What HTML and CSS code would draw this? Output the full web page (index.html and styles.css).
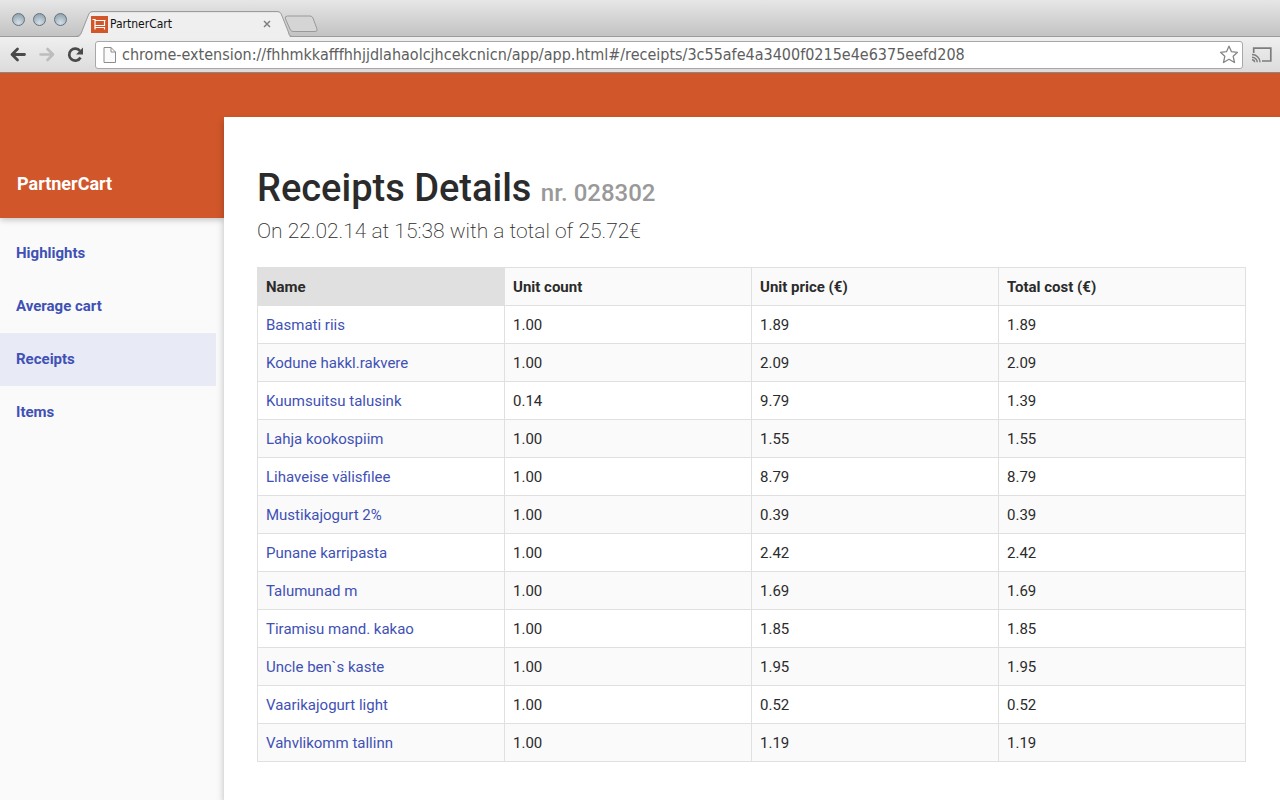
FILE: index.html
```html
<!DOCTYPE html>
<html lang="en">
<head>
<meta charset="utf-8">
<title>PartnerCart</title>
<link rel="stylesheet" href="styles.css">
</head>
<body>
<div class="browser">
  <div class="tab-strip">
    <div class="window-buttons">
      <button class="light" aria-label="Close window"></button>
      <button class="light" aria-label="Minimize window"></button>
      <button class="light" aria-label="Zoom window"></button>
    </div>
    <div class="tab">
      <svg class="tab-shape" width="216" height="27" viewBox="0 0 216 27" aria-hidden="true">
        <path d="M0 26.5C4 26 5 24 6 21L12 5C13 2 14 1.500 17 1.500H201C204 1.500 205 2 206 5L212 20C213 24 213 26.500 216 26.500V28H0Z" fill="#efefef"/>
        <path d="M0 25.500C4 25 5 23 6 20L12 5C13 2 14 .5 17 .5H201C204 .5 205 2 206 5L212 20C213 23 213 25 216 25.500" fill="none" stroke="#9b9b9b"/>
      </svg>
      <svg class="favicon" width="17" height="17" viewBox="0 0 17 17" aria-hidden="true">
        <rect width="17" height="17" fill="#d1572a"/>
        <path d="M1.500 3.500H4V13.500M4 4.500H14.500M13.500 4V9.500H4M3.500 11.500H14M13.500 11V13.500" fill="none" stroke="#fff" stroke-width="1.200"/>
      </svg>
      <span class="tab-title">PartnerCart</span>
      <button class="tab-close" aria-label="Close tab">
        <svg width="8" height="8" viewBox="0 0 8 8"><path d="M1 1L7 7M7 1L1 7" stroke="#808080" stroke-width="1.500"/></svg>
      </button>
    </div>
    <button class="new-tab" aria-label="New tab">
      <svg width="34" height="18" viewBox="0 0 34 18"><path d="M3.500 1H26Q28 1 29 3L33 14Q34 16.500 31 16.500H9Q7 16.500 6 14L1.500 4Q.5 1 3.500 1Z" fill="#d5d5d5" stroke="#9a9a9a"/></svg>
    </button>
  </div>
  <div class="toolbar">
    <button class="tool" aria-label="Back"><svg width="17" height="15" viewBox="0 0 17 15"><path d="M7.500 2L2 7.500L7.500 13M2.500 7.500H14.500" fill="none" stroke="#4a4a4a" stroke-width="2.800" stroke-linecap="round" stroke-linejoin="round"/></svg></button>
    <button class="tool" aria-label="Forward"><svg width="17" height="15" viewBox="0 0 17 15"><path d="M9.500 2L15 7.500L9.500 13M14.500 7.500H2.500" fill="none" stroke="#bdbdbd" stroke-width="2.600" stroke-linecap="round" stroke-linejoin="round"/></svg></button>
    <button class="tool" aria-label="Reload"><svg width="18" height="16" viewBox="0 0 18 16"><path d="M14 4A6 6 0 1 0 14.500 10.500" fill="none" stroke="#4a4a4a" stroke-width="2.700"/><path d="M17 .5V7.500H10Z" fill="#4a4a4a"/></svg></button>
    <div class="omnibox">
      <svg width="13" height="16" viewBox="0 0 13 16" aria-hidden="true"><path d="M1 .5H8L12.500 5V15.500H1ZM8 .5V5H12.500" fill="#fafafa" stroke="#8d8d8d"/></svg>
      <input class="address" aria-label="Address" value="chrome-extension://fhhmkkafffhhjjdlahaolcjhcekcnicn/app/app.html#/receipts/3c55afe4a3400f0215e4e6375eefd208">
      <button class="star" aria-label="Bookmark"><svg width="20" height="19" viewBox="0 0 20 19"><path d="M10 1.200L12.500 6.700L18.500 7.300L14.200 11.300L15.500 17.500L10 14.300L4.500 17.500L5.800 11.300L1.500 7.300L7.500 6.700Z" fill="#fff" stroke="#868686" stroke-width="1.300" stroke-linejoin="round"/></svg></button>
    </div>
    <button class="cast" aria-label="Cast"><svg width="20" height="16" viewBox="0 0 20 16"><path d="M1.700 6V1.200H18.800V14H10" fill="none" stroke="#7d7d7d" stroke-width="1.700"/><path d="M0 7.500A8 8 0 0 1 8 15.300M0 10.200A5.300 5.300 0 0 1 5.300 15.300M0 12.800A2.600 2.600 0 0 1 2.600 15.300" fill="none" stroke="#7d7d7d" stroke-width="1.400"/></svg></button>
  </div>
</div>
<div class="app">
  <aside class="sidebar">
    <div class="brand">PartnerCart</div>
    <nav class="nav">
      <a href="#/highlights">Highlights</a>
      <a href="#/average">Average cart</a>
      <a href="#/receipts" class="active">Receipts</a>
      <a href="#/items">Items</a>
    </nav>
  </aside>
  <main class="content">
    <h1>Receipts Details <small>nr. 028302</small></h1>
    <p class="lead">On 22.02.14 at 15:38 with a total of 25.72€</p>
    <table class="receipt">
      <thead><tr><th scope="col" class="sorted">Name</th><th scope="col">Unit count</th><th scope="col">Unit price (€)</th><th scope="col">Total cost (€)</th></tr></thead>
      <tbody>
        <tr><td><a href="#/items/1">Basmati riis</a></td><td>1.00</td><td>1.89</td><td>1.89</td></tr>
        <tr><td><a href="#/items/2">Kodune hakkl.rakvere</a></td><td>1.00</td><td>2.09</td><td>2.09</td></tr>
        <tr><td><a href="#/items/3">Kuumsuitsu talusink</a></td><td>0.14</td><td>9.79</td><td>1.39</td></tr>
        <tr><td><a href="#/items/4">Lahja kookospiim</a></td><td>1.00</td><td>1.55</td><td>1.55</td></tr>
        <tr><td><a href="#/items/5">Lihaveise välisfilee</a></td><td>1.00</td><td>8.79</td><td>8.79</td></tr>
        <tr><td><a href="#/items/6">Mustikajogurt 2%</a></td><td>1.00</td><td>0.39</td><td>0.39</td></tr>
        <tr><td><a href="#/items/7">Punane karripasta</a></td><td>1.00</td><td>2.42</td><td>2.42</td></tr>
        <tr><td><a href="#/items/8">Talumunad m</a></td><td>1.00</td><td>1.69</td><td>1.69</td></tr>
        <tr><td><a href="#/items/9">Tiramisu mand. kakao</a></td><td>1.00</td><td>1.85</td><td>1.85</td></tr>
        <tr><td><a href="#/items/10">Uncle ben`s kaste</a></td><td>1.00</td><td>1.95</td><td>1.95</td></tr>
        <tr><td><a href="#/items/11">Vaarikajogurt light</a></td><td>1.00</td><td>0.52</td><td>0.52</td></tr>
        <tr><td><a href="#/items/12">Vahvlikomm tallinn</a></td><td>1.00</td><td>1.19</td><td>1.19</td></tr>
      </tbody>
    </table>
  </main>
</div>
</body>
</html>
```
FILE: styles.css
```css
* { box-sizing: border-box; }

body {
  margin: 0;
  min-height: 100vh;
  display: flex;
  flex-direction: column;
  font-family: Roboto, "Liberation Sans", sans-serif;
  font-size: 15px;
  color: #2b2b2b;
  background: #fff;
}

button {
  padding: 0;
  border: 0;
  background: none;
}

svg { display: block; }
a { text-decoration: none; color: #3f51b5; }

.tab-strip {
  display: flex;
  align-items: flex-end;
  height: 37px;
  background: linear-gradient(#e6e6e6, #c2c2c2);
  box-shadow: inset 0 -1px #9b9b9b;
}

.window-buttons {
  display: flex;
  gap: 8px;
  width: 76px;
  padding: 0 0 11px 12px;
}

.light {
  width: 13px;
  height: 13px;
  border: 1px solid #66727c;
  border-radius: 50%;
  background: radial-gradient(circle at 50% 80%, #d3e0e8, #8698a5);
}

.tab {
  position: relative;
  display: flex;
  align-items: center;
  width: 212px;
  height: 26px;
  padding: 0 17px 0 15px;
}

.tab-shape {
  position: absolute;
  left: 0;
  top: 0;
}

.favicon, .tab-title, .tab-close { position: relative; }

.tab-title {
  flex: 1;
  padding-left: 2px;
  font: 12px/16px "DejaVu Sans Condensed", "DejaVu Sans", sans-serif;
  color: #111;
}

.new-tab {
  position: relative;
  padding: 0 0 4px;
  margin-left: -4px;
}

.toolbar {
  display: flex;
  align-items: center;
  height: 36px;
  padding: 0 8px 0 10px;
  background: linear-gradient(#efefef, #dcdcdc);
  border-bottom: 1px solid #8f8580;
}

.tool { margin-right: 11px; }

.omnibox {
  flex: 1;
  display: flex;
  align-items: center;
  height: 28px;
  padding: 0 3px 0 7px;
  border: 1px solid #a8a8a8;
  border-radius: 3px;
  background: #fff;
}

.address {
  flex: 1;
  min-width: 0;
  height: 24px;
  margin: 0;
  padding: 0 0 0 6px;
  border: 0;
  outline: 0;
  font: 16px/20px "DejaVu Sans Condensed", "DejaVu Sans", sans-serif;
  color: #5e5e5e;
  background: none;
}

.cast { margin-left: 9px; }

.app {
  flex: 1;
  display: flex;
  padding-top: 44px;
  background: #d1572a;
}

.sidebar {
  flex: 0 0 224px;
  display: flex;
  flex-direction: column;
  overflow: hidden;
  background: #fafafa;
}

.brand {
  height: 101px;
  padding: 55px 17px 0;
  font-size: 18px;
  line-height: 24px;
  font-weight: 700;
  color: #fff;
  background: #d1572a;
  box-shadow: 0 2px 6px rgba(0, 0, 0, .22);
}

.nav {
  display: flex;
  flex-direction: column;
  padding: 9px 8px 0 0;
}

.nav a {
  padding: 0 16px;
  line-height: 53px;
  font-weight: 700;
}

.nav .active { background: #e8eaf6; }

.content {
  position: relative;
  flex: 1;
  padding: 47px 34px 36px 33px;
  background: #fff;
  box-shadow: 0 4px 7px rgba(0, 0, 0, .25);
}

h1 {
  margin: 0;
  font-size: 38px;
  line-height: 48px;
  font-weight: 500;
}

h1 small {
  font-size: 24px;
  line-height: 24px;
  color: #999;
}

.lead {
  margin: 3px 0 20px;
  font-size: 21px;
  line-height: 32px;
  font-weight: 200;
}

.receipt {
  width: 100%;
  table-layout: fixed;
  border-collapse: collapse;
}

.receipt th, .receipt td {
  height: 38px;
  padding: 0 8px;
  border: 1px solid #e0e0e0;
  text-align: left;
}

.receipt th { font-weight: 700; background: #fafafa; }
.receipt .sorted { background: #e0e0e0; }
.receipt tbody tr:nth-child(even) { background: #fafafa; }
```
